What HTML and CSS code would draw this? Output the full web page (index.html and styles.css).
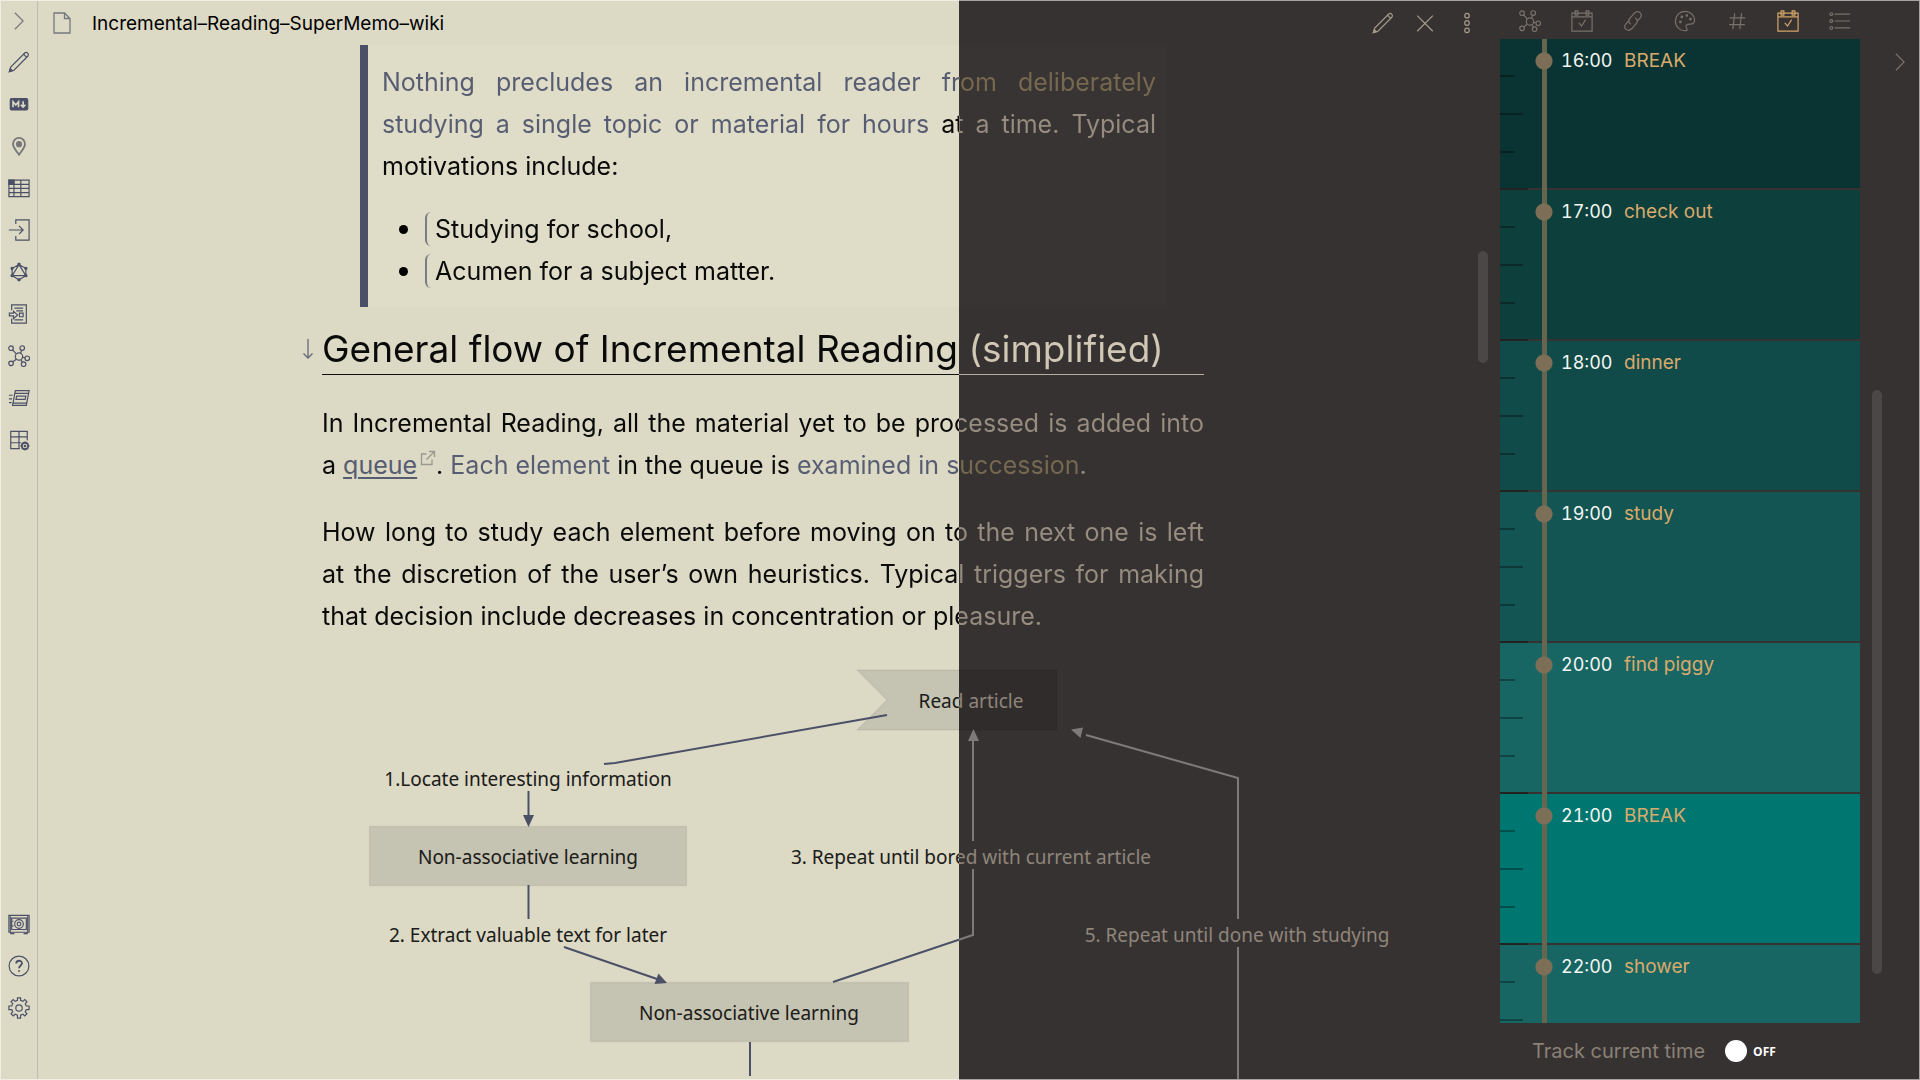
FILE: index.html
```html
<!DOCTYPE html>
<html lang="en">
<head>
<meta charset="utf-8">
<title>Incremental-Reading-SuperMemo-wiki</title>
<link rel="stylesheet" href="styles.css">
</head>
<body>
<svg class="defs" aria-hidden="true">
  <symbol id="pencil" viewBox="0 0 24 24"><path d="M1.500 22.500 3 17.500 18.500 2q1.500-1 3 .4 1.400 1.600.3 3.100L6.500 21zM17 3.500 20.300 7"/><path class="solid" d="m1.500 22.500 1-3.300 2.300 2.300z"/></symbol>
  <symbol id="graph" viewBox="0 0 24 24"><circle cx="12" cy="12.500" r="4"/><circle cx="3.300" cy="3.500" r="2.500"/><circle cx="15.500" cy="3.300" r="2.500"/><circle cx="21" cy="14.500" r="2.500"/><circle cx="3.300" cy="20" r="2.500"/><circle cx="17" cy="21" r="2.500"/><path d="m5 5.300 4 4.300M14.800 5.700l-1 3.200M16 13.400l2.500.6M9 15.500l-3.600 2.700M14 16l1.700 2.800"/></symbol>
  <symbol id="calendar" viewBox="0 0 24 24"><path d="M1 3.500h22v19.500H1zM1 7.500h22M4.500 1h3v4.500h-3zM16.500 1h3v4.500h-3zM8.500 14l3 3.500 4.500-7"/></symbol>
  <symbol id="chevron" viewBox="0 0 24 24"><path d="m7.500 3 9 9-9 9"/></symbol>
</svg>

<div class="app">
  <nav class="ribbon" aria-label="Ribbon">
    <button class="faded" aria-label="Expand"><svg viewBox="0 0 24 24"><use href="#chevron"/></svg></button>
    <button aria-label="Edit"><svg viewBox="0 0 24 24"><use href="#pencil"/></svg></button>
    <button aria-label="Markdown"><svg viewBox="0 0 24 24"><rect class="solid" x="2.500" y="6" width="19" height="12.500" rx="1.500"/><path class="knock" d="M5.500 15.500V9.500l3 3.500 3-3.500v6M16.500 9v6M14 12.800l2.500 2.600 2.500-2.600"/></svg></button>
    <button class="grey" aria-label="Pin"><svg viewBox="0 0 24 24"><path class="heavy" d="M12 21.500C8.500 16.500 5.500 13.500 5.500 9.700a6.500 6.500 0 0 1 13 0c0 3.800-3 6.800-6.500 11.800z"/><circle class="solid" cx="12" cy="10" r="2.700"/></svg></button>
    <button aria-label="Table"><svg viewBox="0 0 24 24"><path d="M1 3.500h22v18H1zM1 8h22M1 12.500h22M1 17h22M6.500 3.500v18M14 3.500v18"/><path class="solid" d="M1 3.500h5.500V8H1z"/></svg></button>
    <button aria-label="Import"><svg viewBox="0 0 24 24"><path d="M8.500 5.500V1H23v22H8.500v-4.500M1 12h15.500M12 7.500l4.500 4.500-4.500 4.500"/></svg></button>
    <button aria-label="Relations"><svg viewBox="0 0 24 24"><path d="m12 4 7.500 4v8L12 20.500 4.500 16V8zM12 4l7.500 12h-15z"/><g class="solid"><circle cx="12" cy="3.500" r="1.200"/><circle cx="19.500" cy="8" r="1.200"/><circle cx="19.500" cy="16" r="1.200"/><circle cx="12" cy="20.500" r="1.200"/><circle cx="4.500" cy="16" r="1.200"/><circle cx="4.500" cy="8" r="1.200"/></g></svg></button>
    <button aria-label="Notes"><svg viewBox="0 0 24 24"><path d="M4 8V2h16v20H4v-5M7 5.500h9.500M9 8.500h7.500M7 18.500h9.500M12.500 15h4v-4h-4zM1.500 11h4.500V9l4.500 4-4.500 4v-3H1.500z"/></svg></button>
    <button aria-label="Graph"><svg viewBox="0 0 24 24"><use href="#graph"/></svg></button>
    <button aria-label="Cards"><svg viewBox="0 0 24 24"><path d="M8 4h15l-3 16H5zM7.500 7H22M9.500 10h10l-.8 3.500h-10zM1 9h4M1 13h3.500M1 17h3M6 17.500h14"/></svg></button>
    <button aria-label="Table settings"><svg viewBox="0 0 24 24"><path d="M13 21.500H3v-19h18v10M3 8.500h18M3 15h11M12 2.500v19"/><circle class="heavy" cx="18.500" cy="18.500" r="3.500"/><circle cx="18.500" cy="18.500" r=".8"/><path d="M18.500 13.500v2M18.500 21.500v2M13.500 18.500h2M21.500 18.500h2M15 15l1.200 1.200M20.800 20.800 22 22M22 15l-1.200 1.200M15 22l1.200-1.200"/></svg></button>
    <span class="fill"></span>
    <button aria-label="Vault"><svg viewBox="0 0 24 24"><path d="M1 2.500h22v18.500H1zM4 5.500h16V18H4zM3 21v1.500h4M17 22.500h4V21M4 9h2M4 14h2"/><path d="M2.500 3.500v17M21.500 3.500v17"/><circle cx="12" cy="12" r="4.700"/><circle cx="12" cy="12" r="2"/></svg></button>
    <button aria-label="Help"><svg viewBox="0 0 24 24"><circle cx="12" cy="12" r="10.800"/><path class="heavy" d="M9 9.300c0-4 6.200-4 6.200-.2 0 2.400-3.100 2.500-3.100 5.400M12.100 16.500v1.700"/></svg></button>
    <button aria-label="Settings"><svg viewBox="0 0 24 24"><path d="M10.300 1h3.400v2.700l2.600 1.100 2-1.900 2.400 2.400-1.900 2 1.100 2.500H23v3.900h-3.100l-1.100 2.600 1.900 2-2.400 2.400-2-1.900-2.600 1.100V23h-3.400v-3.100l-2.600-1.100-2 1.900-2.400-2.400 1.900-2-1.100-2.600H1V9.800h3.100l1.100-2.500-1.900-2 2.400-2.400 2 1.900 2.600-1.100z"/><circle cx="12" cy="12" r="3.500"/></svg></button>
  </nav>

  <main class="pane">
    <header class="pane-head">
      <svg class="file" viewBox="0 0 18 22"><path d="M1 1h10.500L17 6.500V21H1zM11.500 1v5.500H17"/></svg>
      <h1>Incremental–Reading–SuperMemo–wiki</h1>
      <div class="actions">
        <button aria-label="Edit"><svg viewBox="0 0 24 24"><use href="#pencil"/></svg></button>
        <button aria-label="Close"><svg viewBox="0 0 24 24"><path d="m3.500 4 17 17M20.500 4l-17 17"/></svg></button>
        <button aria-label="More"><svg viewBox="0 0 24 24"><circle cx="12" cy="4" r="2.500"/><circle cx="12" cy="12" r="2.500"/><circle cx="12" cy="20" r="2.500"/></svg></button>
      </div>
    </header>

    <div class="scroller">
      <article>
        <blockquote>
          <p><mark>Nothing precludes an incremental reader from deliberately studying&nbsp;a&nbsp;single topic or material for hours</mark> <span>at a time. Typical motivations&nbsp;include:</span></p>
          <ul>
            <li><span>Studying for school,</span></li>
            <li><span>Acumen for a subject matter.</span></li>
          </ul>
        </blockquote>
        <h2><svg class="fold" viewBox="0 0 12 22"><path d="M6 1v19M1.500 15.500 6 20l4.500-4.500"/></svg><span>General flow of Incremental Reading (simplified)</span></h2>
        <p><span>In Incremental Reading, all the material yet to be processed is added into a</span>&nbsp;<a href="#queue">queue<svg viewBox="0 0 16 16"><path d="M6.500 4H1.500v10.500H12V9.500M9 1.500h5.500V7M14.500 1.500 6.500 9.500"/></svg></a><span>.</span> <mark>Each element</mark> <span>in the queue is</span> <mark>examined in succession</mark><span>.</span></p>
        <p><span>How long to study each element before moving on to the next one is left at&nbsp;the&nbsp;discretion of the user’s own heuristics. Typical triggers for making that&nbsp;decision include decreases in concentration or pleasure.</span></p>

        <svg class="diagram" viewBox="322 637 882 442" role="img" aria-label="Incremental reading flow">
          <defs>
            <linearGradient id="ink" gradientUnits="userSpaceOnUse" x1="958" x2="960" y1="0" y2="0"><stop offset=".5" stop-color="#1c1c1a"/><stop offset=".5" stop-color="#8f867b"/></linearGradient>
            <linearGradient id="wire" gradientUnits="userSpaceOnUse" x1="958" x2="960" y1="0" y2="0"><stop offset=".5" stop-color="#4c5067"/><stop offset=".5" stop-color="#7d7b7a"/></linearGradient>
            <linearGradient id="box" gradientUnits="userSpaceOnUse" x1="958" x2="960" y1="0" y2="0"><stop offset=".5" stop-color="#c5c3b1"/><stop offset=".5" stop-color="#302c2b"/></linearGradient>
          </defs>
          <g class="boxes">
            <path d="M857 670h200v60H857l30-30z"/>
            <path d="M369.500 826.500h317v59h-317z"/>
            <path d="M590.500 982.500h318v59h-318z"/>
          </g>
          <g class="wires">
            <path d="m887 715-272 48-11 1"/>
            <path d="M528.500 791v28M528.500 885v34M564 947l93 32M833 982l140-47v-66M973 841V740M1238 1079V947M1238 919V778l-152-43M750 1042v34"/>
          </g>
          <g class="heads">
            <path d="m528.500 827-5.500-12h11zM667 983l-12.500 1 4-10.500zM973.500 729l5.500 12h-11zM1071 729.500l12-2-2.500 10.500z"/>
          </g>
          <g class="labels">
            <text x="971" y="708">Read article</text>
            <text x="528" y="786">1.Locate interesting information</text>
            <text x="528" y="864">Non-associative learning</text>
            <text x="528" y="942">2. Extract valuable text for later</text>
            <text x="971" y="864">3. Repeat until bored with current article</text>
            <text x="1237" y="942">5. Repeat until done with studying</text>
            <text x="749" y="1020">Non-associative learning</text>
          </g>
        </svg>
      </article>
      <i class="thumb"></i>
    </div>
  </main>

  <aside class="dock">
    <div class="tabs" role="tablist">
      <button role="tab" aria-label="Graph"><svg viewBox="0 0 24 24"><use href="#graph"/></svg></button>
      <button role="tab" aria-label="Calendar"><svg viewBox="0 0 24 24"><use href="#calendar"/></svg></button>
      <button role="tab" aria-label="Links"><svg viewBox="0 0 24 24"><path d="M9.500 15.500c-3-2-2.500-5-.5-7l4.500-5C17.500-.3 23.500 4 20 8.500l-3.500 4"/><path d="M14.500 8.500c3 2 2.500 5 .5 7l-4.500 5c-4 3.800-10-.5-6.500-5l3.500-4"/></svg></button>
      <button role="tab" aria-label="Palette"><svg viewBox="0 0 24 24"><path d="M14 22.300C7 24 1.500 18 1.500 12.300 1.500 6 6 1.500 12 1.500S22.500 6 22.500 11c0 3-2 4.500-5 4.500-4 0-5 1.500-4 3.500.7 1.300 1.300 2.500.5 3.300z"/><g class="solid"><circle cx="7" cy="13" r=".8"/><circle cx="8.500" cy="7.500" r=".8"/><circle cx="14" cy="6" r=".8"/><circle cx="18" cy="10" r=".8"/></g></svg></button>
      <button role="tab" aria-label="Tags"><svg viewBox="0 0 24 24"><path d="M9.500 3.500 7.500 21M17 3.500 15 21M4 8.500h17M3.500 16h17"/></svg></button>
      <button role="tab" aria-label="Day planner" aria-selected="true" class="active"><svg viewBox="0 0 24 24"><use href="#calendar"/></svg></button>
      <button role="tab" aria-label="Outline"><svg viewBox="0 0 24 24"><circle cx="2.500" cy="4.500" r="1.500"/><circle cx="2.500" cy="12" r="1.500"/><circle cx="2.500" cy="19.500" r="1.500"/><path d="M6 4.500h17M6 12h17M6 19.500h17"/></svg></button>
    </div>
    <div class="planner">
      <ol class="timeline">
        <li class="h16"><time>16:00</time><span>BREAK</span></li>
        <li class="h17"><time>17:00</time><span>check out</span></li>
        <li class="h18"><time>18:00</time><span>dinner</span></li>
        <li class="h19"><time>19:00</time><span>study</span></li>
        <li class="h20"><time>20:00</time><span>find piggy</span></li>
        <li class="h21"><time>21:00</time><span>BREAK</span></li>
        <li class="h22"><time>22:00</time><span>shower</span></li>
      </ol>
      <i class="thumb"></i>
    </div>
    <label class="track"><span>Track current time</span><input type="checkbox"><b>OFF</b></label>
  </aside>

  <div class="edge">
    <button aria-label="Collapse"><svg viewBox="0 0 24 24"><use href="#chevron"/></svg></button>
  </div>
</div>
</body>
</html>
```
FILE: styles.css
```css
:root {
  --split: calc(50vw - 1px);
  --light: #dcd9c5;
  --dark: #363231;
  --slate: #4c5067;
}

* { box-sizing: border-box; }

body {
  margin: 0;
  font-family: Inter, "Liberation Sans", sans-serif;
  background: linear-gradient(90deg, #efeee4 var(--split), #a5a4a0 0);
}

.defs { position: absolute; width: 0; height: 0; }

.app {
  display: grid;
  grid-template-columns: 37px minmax(0, 1fr) 394px 37px;
  height: calc(100vh - 2px);
  margin: 1px;
  background: linear-gradient(90deg, var(--light) calc(var(--split) - 1px), var(--dark) 0);
  overflow: hidden;
}

button {
  display: flex;
  align-items: center;
  justify-content: center;
  padding: 0;
  border: 0;
  background: none;
  color: inherit;
}

svg {
  fill: none;
  stroke: currentColor;
  stroke-width: 1.3;
}

button svg { width: 22px; height: 22px; }
.solid { fill: currentColor; }
.heavy { stroke-width: 2; }
.knock { stroke: var(--light); stroke-width: 1.8; }

/* left ribbon */
.ribbon {
  display: flex;
  flex-direction: column;
  padding-bottom: 50px;
  border-right: 1px solid #bfbdab;
  color: var(--slate);
}
.ribbon button { height: 42px; }
.ribbon .faded { height: 40px; }
.ribbon .fill { flex: 1; }
.ribbon .faded, .ribbon .grey { color: #77777a; }

/* note pane */
.pane {
  display: flex;
  flex-direction: column;
  min-width: 0;
  min-height: 0;
}
.pane-head {
  display: flex;
  align-items: center;
  height: 44px;
  padding: 0 0 0 15px;
}
.file { width: 18px; height: 22px; color: #77777f; }
.pane-head h1 {
  margin: 0 0 0 21px;
  font-size: 19px;
  font-weight: 400;
}
.actions { display: flex; margin-left: auto; color: #a39b8b; }
.actions button { width: 42px; height: 44px; }

.scroller { position: relative; flex: 1; min-height: 0; overflow: hidden; }
.thumb { position: absolute; width: 10px; border-radius: 5px; background: #4b4746; }
.scroller .thumb { top: 206px; right: 0; height: 112px; }

article {
  width: 882px;
  margin: 0 auto;
  font-size: 25px;
  line-height: 42px;
}
article p { margin: 0 0 25px; text-align: justify; }
article > p:last-of-type { margin-bottom: 0; }

/* text changes colour where the two themes meet */
article span, article mark {
  background: linear-gradient(90deg, #0a0a0a var(--split), #968d80 0) fixed;
  background-clip: text;
  -webkit-background-clip: text;
  color: transparent;
}
article mark { background-image: linear-gradient(90deg, #565c72 var(--split), #766950 0); }

blockquote {
  margin: 0 38px;
  padding: 16px 10px 15px 14px;
  border-left: 8px solid var(--slate);
  background: linear-gradient(90deg, #dfdcc7 var(--split), #383433 0) fixed;
}
blockquote p { margin-bottom: 21px; }
blockquote ul { margin: 0; padding: 0; list-style: none; }
blockquote li { display: flex; align-items: center; padding-left: 17px; }
blockquote li::before {
  content: "";
  width: 9px;
  height: 9px;
  margin-right: 17px;
  border-radius: 50%;
  background: #000;
}
blockquote li::after {
  content: "";
  width: 6px;
  height: 34px;
  margin-right: 2px;
  border-left: 2px solid #7b7d86;
  border-radius: 6px 0 0 6px;
}
blockquote li span { order: 1; }

h2 {
  position: relative;
  margin: 17px 0 27px;
  font-size: 37px;
  font-weight: 400;
  line-height: 50px;
}
h2 span { background-image: linear-gradient(90deg, #0a0a0a var(--split), #d0c8b4 0); }
h2::after {
  content: "";
  display: block;
  height: 1px;
  background: linear-gradient(90deg, #111 var(--split), #b5ae9f 0) fixed;
}
.fold { position: absolute; left: -20px; top: 14px; width: 12px; height: 22px; color: #66697a; }

article a { color: #565c72; text-decoration-thickness: 2px; text-underline-offset: 3px; }
article a svg { width: 16px; height: 16px; margin-left: 3px; vertical-align: 8px; color: #9a998f; }

.diagram { display: block; width: 100%; overflow: visible; }
.boxes { fill: url(#box); stroke: #000; stroke-opacity: .06; }
.wires { stroke: url(#wire); stroke-width: 2; }
.heads { fill: url(#wire); stroke: none; }
.labels { fill: url(#ink); stroke: none; font: 19px "Noto Sans", sans-serif; text-anchor: middle; }

/* right dock */
.dock { display: flex; flex-direction: column; min-height: 0; color: #77726c; }
.tabs { display: flex; height: 38px; padding: 0 16px 0 16px; }
.tabs button { flex: 1; height: 40px; }
.tabs .active { color: #d3a567; }

.planner { position: relative; flex: 1; min-height: 0; padding: 0 22px 0 12px; overflow: hidden; }
.planner .thumb { top: 351px; right: 0; height: 584px; }

.timeline {
  height: 100%;
  margin: 0;
  padding: 0;
  overflow: hidden;
  list-style: none;
  font-size: 19px;
}
.timeline li {
  display: flex;
  gap: 13px;
  height: 151px;
  padding: 10px 0 0 61px;
  line-height: 24px;
  color: #d9aa6b;
  background-repeat: no-repeat;
  /* marker, axis, quarter-hour ticks, hour tick, separator */
  background-image:
    radial-gradient(circle, #7d6f57 8px, #7d6f5700 9px),
    linear-gradient(#66654f, #66654f),
    linear-gradient(#0005, #0005),
    linear-gradient(#0005, #0005),
    linear-gradient(#0005, #0005),
    linear-gradient(#0005, #0005),
    linear-gradient(var(--dark), var(--dark));
  background-size: 20px 20px, 5px 151px, 15px 2px, 23px 2px, 15px 2px, 28px 2px, 100% 2px;
  background-position: 34px 12px, 42px 0, 0 36px, 0 74px, 0 112px, 0 149px, 0 149px;
}
.timeline time {
  width: 50px;
  font-size: 18px;
  font-variant-numeric: tabular-nums;
  color: #f4f6f2;
}
.h16 { background-color: #093433; }
.h17 { background-color: #0d3f3d; }
.h18 { background-color: #114b49; }
.h19 { background-color: #125553; }
.h20 { background-color: #176664; }
.h21 { background-color: #007671; }
.h22 { background-color: #176664; }

.track {
  display: flex;
  align-items: center;
  height: 56px;
  padding-left: 44px;
  font-size: 20px;
  color: #8a8177;
}
.track input {
  appearance: none;
  width: 22px;
  height: 22px;
  margin: 0 6px 0 20px;
  border-radius: 50%;
  background: #fff;
}
.track b { font: 700 12px "Open Sans", sans-serif; color: #fff; }

.edge { padding-top: 40px; color: #77726c; }
.edge button { width: 36px; height: 42px; }
```
